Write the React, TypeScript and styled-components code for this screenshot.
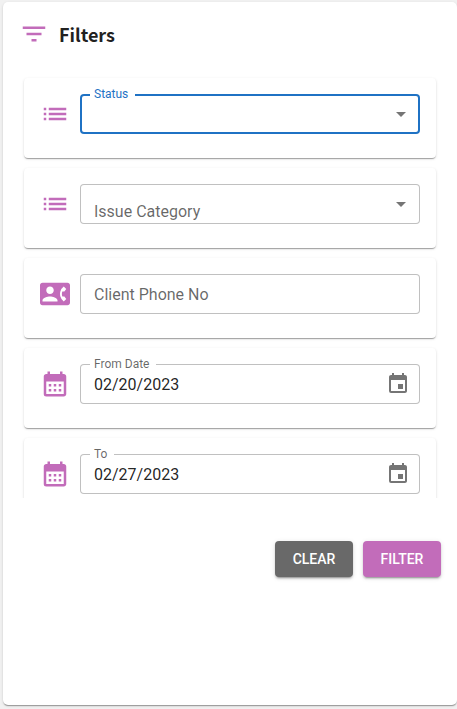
import React from "react";
import styled, { createGlobalStyle, css } from "styled-components";
import {
  MdArrowDropDown,
  MdCalendarMonth,
  MdContactPhone,
  MdEvent,
  MdFilterList,
  MdList,
} from "react-icons/md";

const accent = "#c26cba";
const primary = "#1f72c4";

const GlobalStyle = createGlobalStyle`
  *, *::before, *::after { box-sizing: border-box; }
  body {
    margin: 0;
    background: #f1f1f1;
    font-family: Roboto, "Liberation Sans", sans-serif;
    color: rgba(0, 0, 0, 0.87);
  }
`;

const Page = styled.div`
  display: flex;
  min-height: 100vh;
  padding: 2px 0 4px 3px;
`;

const Panel = styled.main`
  flex: 1;
  min-width: 0;
  padding: 16px;
  background: #fff;
  border-radius: 5px;
  box-shadow: 0 2px 1px -1px rgba(0, 0, 0, 0.2), 0 1px 1px rgba(0, 0, 0, 0.14),
    0 1px 3px rgba(0, 0, 0, 0.12);
`;

const Header = styled.header`
  display: flex;
  align-items: center;
  gap: 10px;
  height: 32px;
  margin-bottom: 23px;
  color: ${accent};
`;

const Title = styled.h1`
  margin: 0;
  font: 700 18px/32px "Noto Sans CJK SC", "Noto Sans", sans-serif;
  color: #212121;
`;

const FilterList = styled.div`
  display: flex;
  flex-direction: column;
  gap: 10px;
  height: 60vh;
  padding: 5px;
  overflow: hidden;
`;

const Card = styled.section`
  display: flex;
  flex-shrink: 0;
  align-items: flex-start;
  gap: 10px;
  height: 80px;
  padding: 16px;
  background: #fff;
  border-radius: 4px;
  box-shadow: 0 2px 1px -1px rgba(0, 0, 0, 0.2), 0 1px 1px rgba(0, 0, 0, 0.14),
    0 1px 3px rgba(0, 0, 0, 0.12);
`;

const IconSlot = styled.span`
  display: flex;
  align-items: center;
  height: 40px;
  color: ${accent};
`;

const Field = styled.div<{ $active?: boolean }>`
  position: relative;
  display: flex;
  flex: 1;
  min-width: 0;
  align-items: center;
  height: 40px;
  border-radius: 4px;
  box-shadow: inset 0 0 0 ${(p) => (p.$active ? `2px ${primary}` : "1px #c0c0c0")};
`;

type LabelPlace = "notch" | "middle" | "low";

const places = {
  notch: css`
    top: -8px;
    left: 10px;
    padding: 0 7px 0 4px;
    background: #fff;
    font-size: 12px;
    line-height: 16px;
  `,
  middle: css`
    top: 9px;
    left: 14px;
    font-size: 16px;
    line-height: 24px;
  `,
  low: css`
    top: 16px;
    left: 14px;
    font-size: 16px;
    line-height: 24px;
  `,
};

const Label = styled.label<{ $place: LabelPlace; $active?: boolean }>`
  position: absolute;
  pointer-events: none;
  color: ${(p) => (p.$active ? primary : "rgba(0, 0, 0, 0.6)")};
  ${(p) => places[p.$place]}
`;

const controlStyle = css`
  flex: 1;
  min-width: 0;
  height: 40px;
  padding: 0 14px;
  border: 0;
  outline: 0;
  background: transparent;
  font: 400 16px/24px Roboto, sans-serif;
  color: inherit;
`;

const TextInput = styled.input`
  ${controlStyle}
`;

const Select = styled.select`
  ${controlStyle}
  appearance: none;
`;

const Arrow = styled.span`
  position: absolute;
  top: 8px;
  right: 7px;
  display: flex;
  color: rgba(0, 0, 0, 0.54);
  pointer-events: none;
`;

const DateButton = styled.button`
  display: flex;
  margin-right: 10px;
  padding: 0;
  border: 0;
  background: transparent;
  color: rgba(0, 0, 0, 0.54);
  cursor: pointer;
`;

const Actions = styled.div`
  display: flex;
  justify-content: flex-end;
  gap: 10px;
  margin-top: 43px;
`;

const Button = styled.button<{ $color: string }>`
  min-width: 78px;
  height: 36px;
  padding: 0 16px;
  border: 0;
  border-radius: 4px;
  background: ${(p) => p.$color};
  color: #fff;
  font: 500 14px/24px Roboto, sans-serif;
  text-transform: uppercase;
  cursor: pointer;
  box-shadow: 0 3px 1px -2px rgba(0, 0, 0, 0.2), 0 2px 2px rgba(0, 0, 0, 0.14),
    0 1px 5px rgba(0, 0, 0, 0.12);
`;

interface SelectFilterProps {
  id: string;
  label: string;
  options: string[];
  active?: boolean;
}

function SelectFilter({ id, label, options, active }: SelectFilterProps) {
  return (
    <Card>
      <IconSlot><MdList size={30} /></IconSlot>
      <Field $active={active}>
        <Label htmlFor={id} $place={active ? "notch" : "low"} $active={active}>{label}</Label>
        <Select id={id} defaultValue="">
          <option value="" />
          {options.map((o) => <option key={o}>{o}</option>)}
        </Select>
        <Arrow><MdArrowDropDown size={24} /></Arrow>
      </Field>
    </Card>
  );
}

function DateFilter({ id, label, value }: { id: string; label: string; value: string }) {
  return (
    <Card>
      <IconSlot><MdCalendarMonth size={30} /></IconSlot>
      <Field>
        <Label htmlFor={id} $place="notch">{label}</Label>
        <TextInput id={id} defaultValue={value} />
        <DateButton type="button" aria-label={`Choose ${label}`}><MdEvent size={24} /></DateButton>
      </Field>
    </Card>
  );
}

export default function App() {
  return (
    <>
      <GlobalStyle />
      <Page>
        <Panel>
          <Header>
            <MdFilterList size={30} />
            <Title>Filters</Title>
          </Header>
          <FilterList>
            <SelectFilter id="status" label="Status" options={["Open", "Closed"]} active />
            <SelectFilter id="category" label="Issue Category" options={["Billing", "Service"]} />
            <Card>
              <IconSlot><MdContactPhone size={30} /></IconSlot>
              <Field>
                <Label htmlFor="phone" $place="middle">Client Phone No</Label>
                <TextInput id="phone" type="tel" />
              </Field>
            </Card>
            <DateFilter id="from" label="From Date" value="02/20/2023" />
            <DateFilter id="to" label="To" value="02/27/2023" />
          </FilterList>
          <Actions>
            <Button type="button" $color="#696969">Clear</Button>
            <Button type="button" $color={accent}>Filter</Button>
          </Actions>
        </Panel>
      </Page>
    </>
  );
}
